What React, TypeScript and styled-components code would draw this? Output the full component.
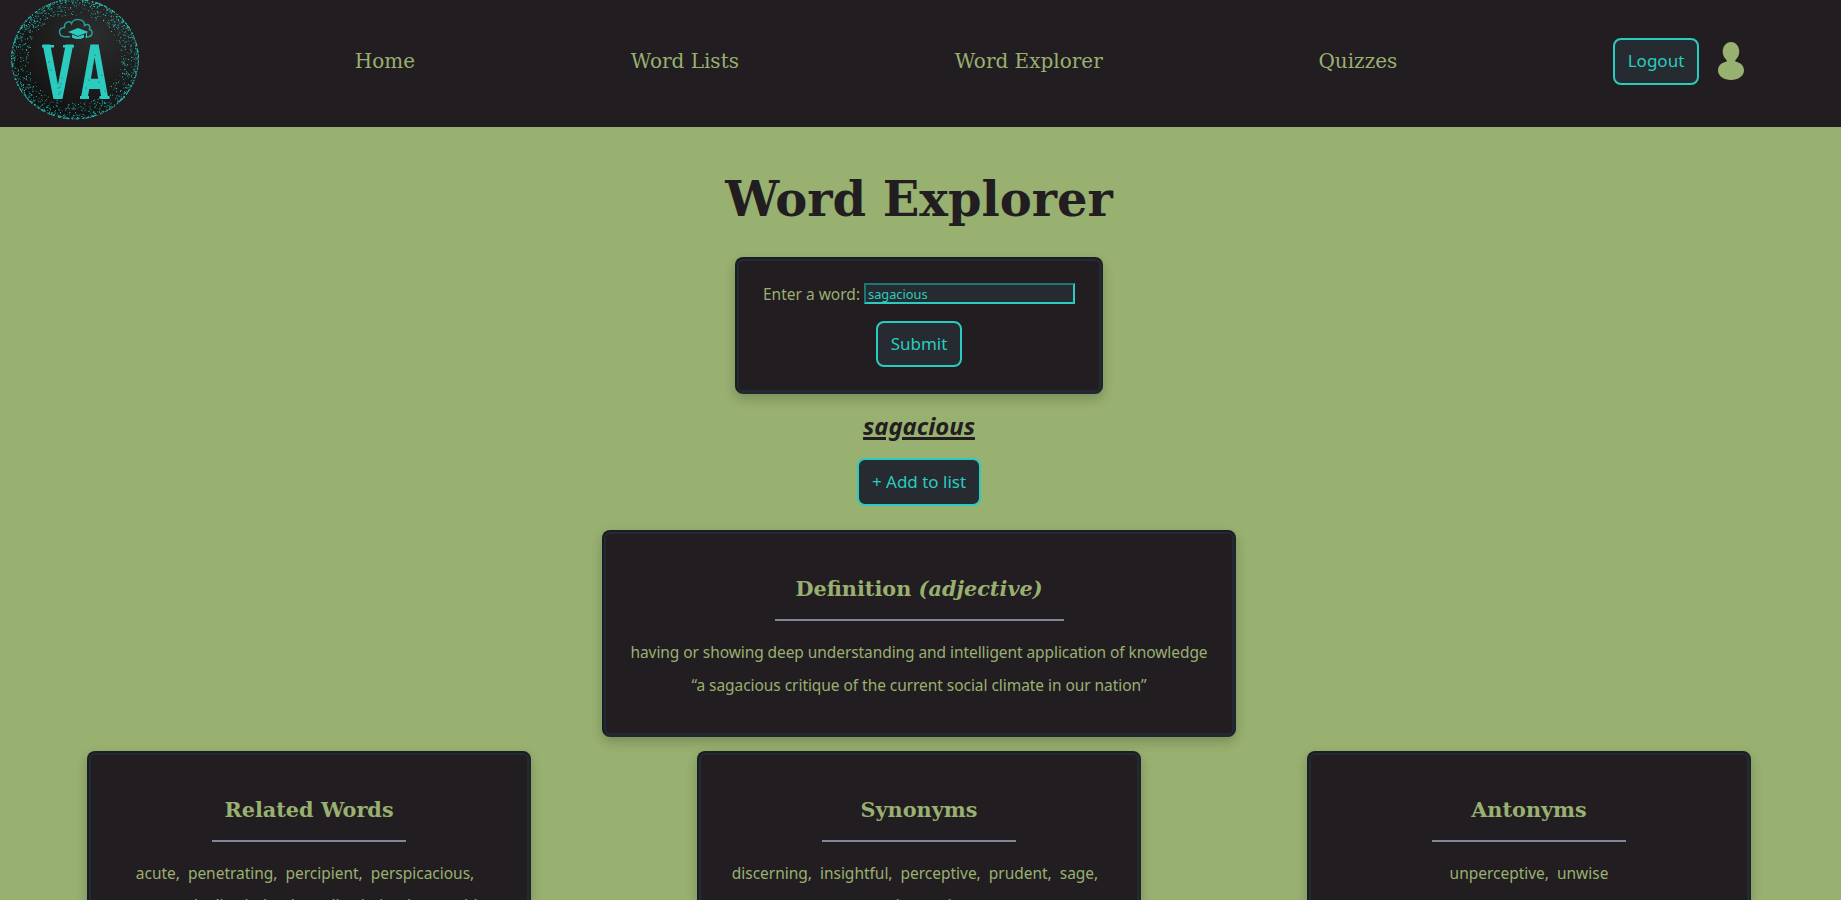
import React from "react";
import styled, { createGlobalStyle } from "styled-components";

const ink = "#221d20";
const slate = "#262b31";
const green = "#98b070";
const teal = "#2bccbf";
const serif = `"DejaVu Serif", serif`;
const sans = `"Noto Sans", "Open Sans", sans-serif`;

const GlobalStyle = createGlobalStyle`
  html, body { height: 100%; overflow: hidden; }
  body { margin: 0; background: ${green}; color: ${green}; font-family: ${sans}; font-size: 15.5px; }
  * { box-sizing: border-box; }
`;

const Page = styled.div`
  height: 900px;
  overflow: hidden;
`;

const NavBar = styled.nav`
  height: 127px;
  background: ${ink};
  display: flex;
  align-items: center;
  justify-content: space-between;
  padding: 0 97px 5px 11px;
`;

const Logo = styled.svg`
  display: block;
  width: 128px;
  height: 122px;
  align-self: flex-start;
`;

const NavLink = styled.a`
  font-family: ${serif};
  font-size: 20px;
  line-height: 24px;
  color: ${green};
`;

const Account = styled.div`
  display: flex;
  align-items: center;
  gap: 19px;
`;

const Button = styled.button<{ $w: number; $h?: number }>`
  width: ${(p) => p.$w}px;
  height: ${(p) => p.$h ?? 47}px;
  padding: 0 0 1px;
  border: 2px solid ${teal};
  border-radius: 8px;
  background: ${slate};
  color: ${teal};
  font-family: ${sans};
  font-size: 17px;
  white-space: nowrap;
`;

const Main = styled.main`
  display: flex;
  flex-direction: column;
  align-items: center;
  padding-right: 3px;
`;

const Title = styled.h1`
  margin: 41px 0 0;
  height: 89px;
  font-family: ${serif};
  font-size: 48px;
  line-height: 62px;
  color: ${ink};
`;

const Card = styled.section<{ $w: number; $h: number }>`
  width: ${(p) => p.$w}px;
  height: ${(p) => p.$h}px;
  flex: none;
  display: flex;
  flex-direction: column;
  align-items: center;
  padding: 2px 26px;
  background: ${ink};
  border: 2px solid;
  border-color: #181e23 #1d252b #1f282f #181e23;
  border-radius: 8px;
  box-shadow: inset 0 0 0 2px #232a31, 0 5px 12px rgba(0, 0, 0, 0.2);
`;

const DefinitionCard = styled(Card)`
  margin-top: 24px;
`;

const Field = styled.label`
  display: flex;
  align-items: center;
  justify-content: space-between;
  width: 312px;
  height: 21px;
  margin: 22px 0 17px;
  white-space: nowrap;
`;

const Input = styled.input`
  width: 211px;
  height: 21px;
  padding: 1px 2px;
  border: 2px inset ${teal};
  background: ${slate};
  color: ${teal};
  font-family: ${sans};
  font-size: 12.8px;
  outline: none;
`;

const Word = styled.h2`
  margin: 15px 0 15px;
  height: 34px;
  line-height: 34px;
  font-size: 23.8px;
  font-style: italic;
  text-decoration: underline;
  text-decoration-thickness: 3px;
  color: ${ink};
`;

const CardHeading = styled.h3`
  margin: 40px 0 0;
  height: 28px;
  font-family: ${serif};
  font-size: 20.8px;
  line-height: 29px;
`;

const Rule = styled.hr`
  width: 50%;
  height: 2px;
  margin: 17px 0 15px;
  border: 0;
  flex: none;
  background: #85869a;
`;

const Line = styled.p<{ $ls?: number; $h?: number }>`
  margin: 0;
  height: ${(p) => p.$h ?? 33}px;
  flex: none;
  line-height: 33px;
  white-space: pre;
  letter-spacing: ${(p) => p.$ls ?? 0}px;
`;

const Columns = styled.div`
  display: flex;
  justify-content: space-between;
  width: 1664px;
  margin-top: 14px;
`;

/* Stipple ring around the badge, denser toward the rim. */
const speckles = (() => {
  let seed = 7;
  const next = () => {
    seed = (seed * 16807) % 2147483647;
    return seed / 2147483647;
  };
  return Array.from({ length: 1700 }, () => {
    const angle = next() * Math.PI * 2;
    const inset = Math.pow(next(), 3) * 0.27;
    return {
      x: 64 + Math.cos(angle) * 63.5 * (1 - inset),
      y: 59 + Math.sin(angle) * 60 * (1 - inset),
      r: 0.3 + next() * 0.3,
    };
  });
})();

const wear = [
  [38, 62], [40, 70], [47, 88], [50, 84], [49, 92], [51, 78], [46, 80], [48, 94],
  [84, 55], [82, 66], [75, 88], [78, 80], [91, 75], [94, 91], [88, 82], [49, 87],
];

function Badge() {
  return (
    <Logo viewBox="0 0 128 122">
      <defs>
        <radialGradient id="disc" cx="0.65" cy="0.3" r="0.75">
          <stop offset="0" stopColor="#2d2d2d" />
          <stop offset="1" stopColor="#101010" />
        </radialGradient>
      </defs>
      <ellipse cx="64" cy="59" rx="62.5" ry="59.5" fill="url(#disc)" />
      {speckles.map((s, i) => (
        <circle key={i} cx={s.x} cy={s.y} r={s.r} fill={teal} />
      ))}
      <path
        d="M59 36.700H54C47 36.700 46.500 28 53.500 27.500C53 21.500 59 20.500 60.500 23.500C62 18 74 18 73.500 25.500C78 23 79.500 26 78.500 29.500C83 31 81 37 77 36.700H74.500"
        fill="none"
        stroke="#259f98"
        strokeWidth="1.500"
      />
      <path d="M57 32L67 28L77.500 32L67 36Z" fill={teal} />
      <path d="M61 34.500L67 36.800L73 34.500V37.500Q67 40.500 61 37.500Z" fill={teal} />
      <path d="M75.500 33V38" stroke={teal} strokeWidth="1" />
      <g fill={teal} fontFamily="DejaVu Sans" fontWeight="bold" fontSize="74">
        <text transform="translate(31.500 99) scale(0.540 1)">V</text>
        <text transform="translate(69.500 99) scale(0.490 1)">A</text>
      </g>
      <g fill={teal}>
        <rect x="31" y="45" width="12" height="2.500" />
        <rect x="52" y="45" width="11" height="2.500" />
        <rect x="69" y="96" width="9" height="3" />
        <rect x="88.500" y="96" width="10" height="3" />
      </g>
      {wear.map(([x, y], i) => (
        <circle key={i} cx={x} cy={y} r="0.6" fill="#17524e" />
      ))}
    </Logo>
  );
}

function UserIcon() {
  return (
    <svg width="26" height="38" viewBox="0 0 26 38" fill={green}>
      <path d="M13 0C18 0 21.300 4.500 21.300 9.800C21.300 13.500 19.500 16 17.300 18.300V19.600C22.500 20.500 26 24 26 28.500C26 34 20.200 38 13 38S0 34 0 28.500C0 24 3.500 20.500 8.700 19.600V18.300C6.500 16 4.700 13.500 4.700 9.800C4.700 4.500 8 0 13 0Z" />
    </svg>
  );
}

const columns = [
  {
    title: "Related Words",
    lines: [
      "acute,  penetrating,  percipient,  perspicacious,  ",
      "seasoned,  discriminating,  discriminative,  rapid,  ",
    ],
  },
  {
    title: "Synonyms",
    lines: ["discerning,  insightful,  perceptive,  prudent,  sage,  ", "sapient,  wise"],
  },
  { title: "Antonyms", lines: ["unperceptive,  unwise"] },
];

export default function App() {
  return (
    <Page>
      <GlobalStyle />
      <NavBar>
        <Badge />
        <NavLink>Home</NavLink>
        <NavLink>Word Lists</NavLink>
        <NavLink>Word Explorer</NavLink>
        <NavLink>Quizzes</NavLink>
        <Account>
          <Button $w={86}>Logout</Button>
          <UserIcon />
        </Account>
      </NavBar>
      <Main>
        <Title>Word Explorer</Title>
        <Card $w={368} $h={137}>
          <Field>
            Enter a word:
            <Input defaultValue="sagacious" />
          </Field>
          <Button $w={86} $h={46}>Submit</Button>
        </Card>
        <Word>sagacious</Word>
        <Button $w={124} $h={48}>+ Add to list</Button>
        <DefinitionCard $w={634} $h={207}>
          <CardHeading>
            Definition <em>(adjective)</em>
          </CardHeading>
          <Rule />
          <Line $ls={-0.077}>having or showing deep understanding and intelligent application of knowledge</Line>
          <Line $ls={-0.055}>“a sagacious critique of the current social climate in our nation”</Line>
        </DefinitionCard>
        <Columns>
          {columns.map((c) => (
            <Card key={c.title} $w={444} $h={240}>
              <CardHeading>{c.title}</CardHeading>
              <Rule />
              {c.lines.map((l) => (
                <Line key={l} $h={32} $ls={-0.02}>{l}</Line>
              ))}
            </Card>
          ))}
        </Columns>
      </Main>
    </Page>
  );
}
